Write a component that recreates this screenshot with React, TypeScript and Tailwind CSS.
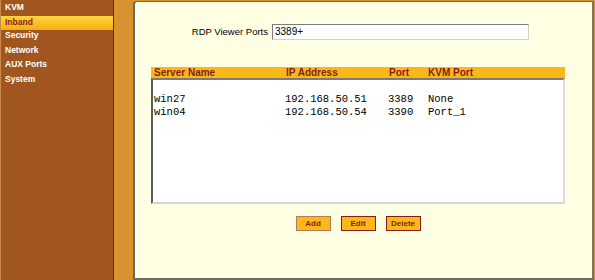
import React from "react"

const menu = ["Security", "Network", "AUX Ports", "System"]

const servers = [
  { name: "win27", ip: "192.168.50.51", port: "3389", kvm: "None" },
  { name: "win04", ip: "192.168.50.54", port: "3390", kvm: "Port_1" },
]

function Sidebar() {
  return (
    <div className="w-[114px] h-full bg-[#a0561e] border-l border-l-[#c98a4a] border-r border-r-[#5a2e0c] font-['Liberation_Sans',Arial,sans-serif] text-[8.5px] font-bold text-white">
      <div className="h-[16px] leading-[10px] pt-[1.5px] pl-[4px]">KVM</div>
      <div className="h-[14px] leading-[10px] pt-[1px] pl-[4px] text-[#8b1a1a] bg-gradient-to-b from-[#ffd43a] to-[#f3ae12]">
        Inband
      </div>
      <div className="mt-[-2px]">
        {menu.map((m) => (
          <div key={m} className="leading-[14.5px] pl-[4px]">
            {m}
          </div>
        ))}
      </div>
    </div>
  )
}

function Button({ label, soft }: { label: string; soft?: boolean }) {
  return (
    <button
      className={`w-[35px] h-[15px] bg-[#fbb917] border text-[8px] font-bold text-[#8b1a1a] leading-none ${
        soft ? "border-[#b8785a]" : "border-[#8b1a1a]"
      }`}
    >
      {label}
    </button>
  )
}

export default function App() {
  return (
    <div className="w-[595px] h-[280px] flex bg-[#d8922f] overflow-hidden font-['Liberation_Sans',Arial,sans-serif]">
      <Sidebar />
      <div className="flex-1 pl-[19px] pt-[1px] pr-[1px]">
        <div className="h-[279px] bg-[#ffffe4] border-l-2 border-t border-l-[#6b6864] border-t-[#6b6864] border-r-2 border-b-2 border-r-[#7d7468] border-b-[#6e6a64] rounded-tl-[4px]">
          <div className="flex items-center mt-[22px]">
            <div className="w-[133px] text-right text-[9.5px] text-black">RDP Viewer Ports</div>
            <div className="ml-[4px] w-[257px] h-[16px] bg-white border border-t-[#7a7a7a] border-l-[#7a7a7a] border-r-[#d4d0c8] border-b-[#d4d0c8] text-[10px] leading-[14px] pl-[2px] text-black">
              3389+
            </div>
          </div>

          <div className="ml-[16px] w-[414px] mt-[27px]">
            <div className="h-[11px] bg-[#f9b816] flex text-[10px] font-bold text-[#8b1a1a] leading-[11px]">
              <div className="w-[135px] pl-[3px]">Server Name</div>
              <div className="w-[103px]">IP Address</div>
              <div className="w-[39px]">Port</div>
              <div>KVM Port</div>
            </div>
            <div className="h-[126px] bg-white border-2 border-t-[#7a7a7a] border-l-[#5a5a5a] border-r-[#dcdcdc] border-b-[#d4d4d4] pt-[13px] font-['Liberation_Mono','Courier_New',monospace] text-[10.5px] leading-[12.5px] text-black">
              {servers.map((s) => (
                <div key={s.name} className="flex">
                  <div className="w-[132px] pl-[1px]">{s.name}</div>
                  <div className="w-[103px]">{s.ip}</div>
                  <div className="w-[40px]">{s.port}</div>
                  <div>{s.kvm}</div>
                </div>
              ))}
            </div>
            <div className="flex justify-center gap-[10px] mt-[12px]">
              <Button label="Add" soft />
              <Button label="Edit" />
              <Button label="Delete" />
            </div>
          </div>
        </div>
      </div>
    </div>
  )
}
